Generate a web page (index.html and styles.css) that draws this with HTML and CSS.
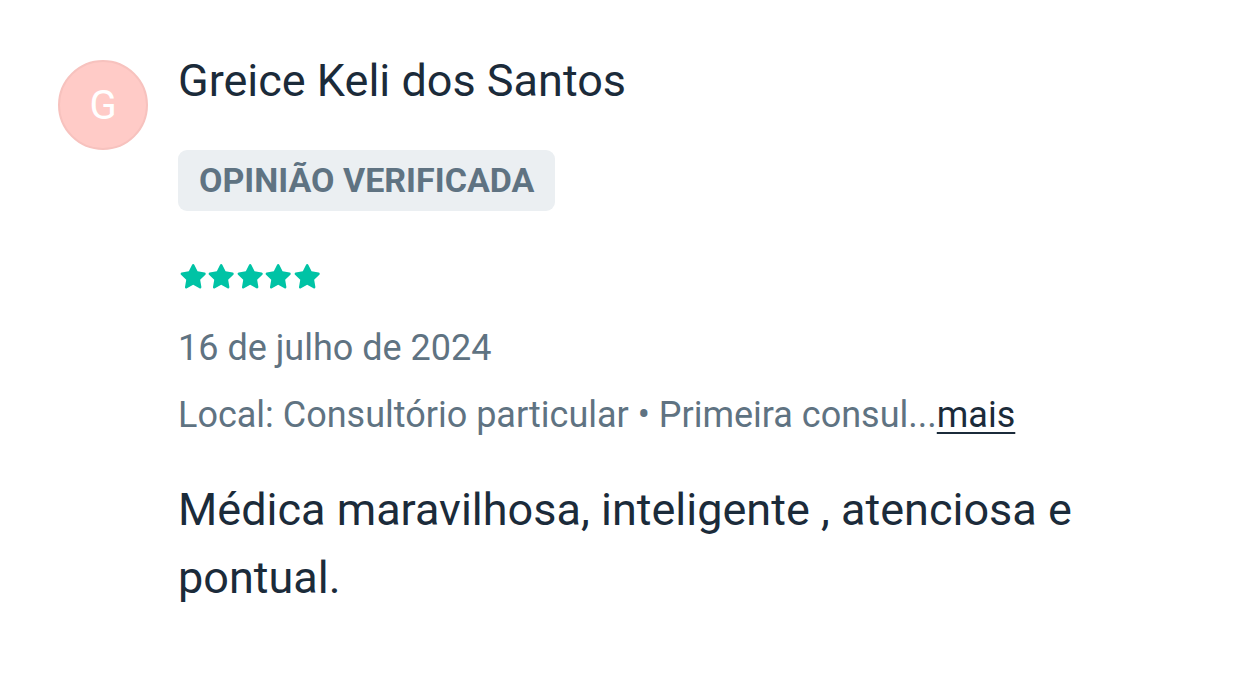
FILE: index.html
```html
<!DOCTYPE html>
<html lang="pt">
<head>
<meta charset="utf-8">
<title>Opinião</title>
<link rel="stylesheet" href="styles.css">
</head>
<body>
<div class="review">
  <div class="avatar">G</div>
  <div class="content">
    <div class="name">Greice Keli dos Santos</div>
    <div class="badge">OPINIÃO VERIFICADA</div>
    <div class="stars">
      <svg class="star" viewBox="1.6 1.8 20.8 20.8"><path d="M12 2.6c.4 0 .7.2.9.6l2.3 4.7 5.2.8c.8.1 1.1 1.1.5 1.7l-3.8 3.7.9 5.2c.1.8-.7 1.4-1.4 1l-4.6-2.5-4.6 2.5c-.7.4-1.6-.2-1.4-1l.9-5.2-3.8-3.7c-.6-.6-.3-1.6.5-1.7l5.2-.8 2.3-4.7c.2-.4.5-.6.9-.6z"/></svg>
      <svg class="star" viewBox="1.6 1.8 20.8 20.8"><path d="M12 2.6c.4 0 .7.2.9.6l2.3 4.7 5.2.8c.8.1 1.1 1.1.5 1.7l-3.8 3.7.9 5.2c.1.8-.7 1.4-1.4 1l-4.6-2.5-4.6 2.5c-.7.4-1.6-.2-1.4-1l.9-5.2-3.8-3.7c-.6-.6-.3-1.6.5-1.7l5.2-.8 2.3-4.7c.2-.4.5-.6.9-.6z"/></svg>
      <svg class="star" viewBox="1.6 1.8 20.8 20.8"><path d="M12 2.6c.4 0 .7.2.9.6l2.3 4.7 5.2.8c.8.1 1.1 1.1.5 1.7l-3.8 3.7.9 5.2c.1.8-.7 1.4-1.4 1l-4.6-2.5-4.6 2.5c-.7.4-1.6-.2-1.4-1l.9-5.2-3.8-3.7c-.6-.6-.3-1.6.5-1.7l5.2-.8 2.3-4.7c.2-.4.5-.6.9-.6z"/></svg>
      <svg class="star" viewBox="1.6 1.8 20.8 20.8"><path d="M12 2.6c.4 0 .7.2.9.6l2.3 4.7 5.2.8c.8.1 1.1 1.1.5 1.7l-3.8 3.7.9 5.2c.1.8-.7 1.4-1.4 1l-4.6-2.5-4.6 2.5c-.7.4-1.6-.2-1.4-1l.9-5.2-3.8-3.7c-.6-.6-.3-1.6.5-1.7l5.2-.8 2.3-4.7c.2-.4.5-.6.9-.6z"/></svg>
      <svg class="star" viewBox="1.6 1.8 20.8 20.8"><path d="M12 2.6c.4 0 .7.2.9.6l2.3 4.7 5.2.8c.8.1 1.1 1.1.5 1.7l-3.8 3.7.9 5.2c.1.8-.7 1.4-1.4 1l-4.6-2.5-4.6 2.5c-.7.4-1.6-.2-1.4-1l.9-5.2-3.8-3.7c-.6-.6-.3-1.6.5-1.7l5.2-.8 2.3-4.7c.2-.4.5-.6.9-.6z"/></svg>
    </div>
    <div class="date">16 de julho de 2024</div>
    <div class="meta">Local: Consultório particular • Primeira consul...<a class="more" href="#">mais</a></div>
    <p class="text">Médica maravilhosa, inteligente , atenciosa e pontual.</p>
  </div>
</div>
</body>
</html>
```
FILE: styles.css
```css
html, body {
  margin: 0;
  padding: 0;
  background: #ffffff;
}
body {
  font-family: Roboto, "Liberation Sans", sans-serif;
  color: #1b2b3a;
}
.review {
  display: flex;
  align-items: flex-start;
  gap: 30px;
  padding: 54px 0 0 58px;
}
.avatar {
  flex: none;
  width: 90px;
  height: 90px;
  margin-top: 6px;
  box-sizing: border-box;
  border-radius: 50%;
  background: #ffcbc7;
  border: 2px solid #f7c2be;
  color: #ffffff;
  font-size: 40px;
  display: flex;
  align-items: center;
  justify-content: center;
}
.content {
  display: flex;
  flex-direction: column;
  align-items: flex-start;
}
.name {
  font-size: 45px;
  line-height: 54px;
  color: #1b2b3a;
}
.badge {
  margin-top: 42px;
  background: #ebeff2;
  border-radius: 9px;
  padding: 0 21px;
  height: 61px;
  font-size: 34px;
  line-height: 61px;
  font-weight: 700;
  color: #5f7382;
}
.stars {
  margin-top: 52px;
  display: flex;
  gap: 0;
  margin-left: 1px;
}
.star {
  width: 28.4px;
  height: 28.4px;
  fill: #00c3a5;
}
.date {
  margin-top: 30px;
  font-size: 36px;
  line-height: 54px;
  color: #5f7382;
}
.meta {
  margin-top: 13px;
  font-size: 36px;
  line-height: 54px;
  color: #5f7382;
}
.more {
  color: #1b2b3a;
  text-decoration: underline;
  text-underline-offset: 5px;
  text-decoration-thickness: 2px;
}
.text {
  margin: 34px 0 0;
  max-width: 960px;
  font-size: 45px;
  line-height: 67.5px;
  color: #1b2b3a;
}
```
